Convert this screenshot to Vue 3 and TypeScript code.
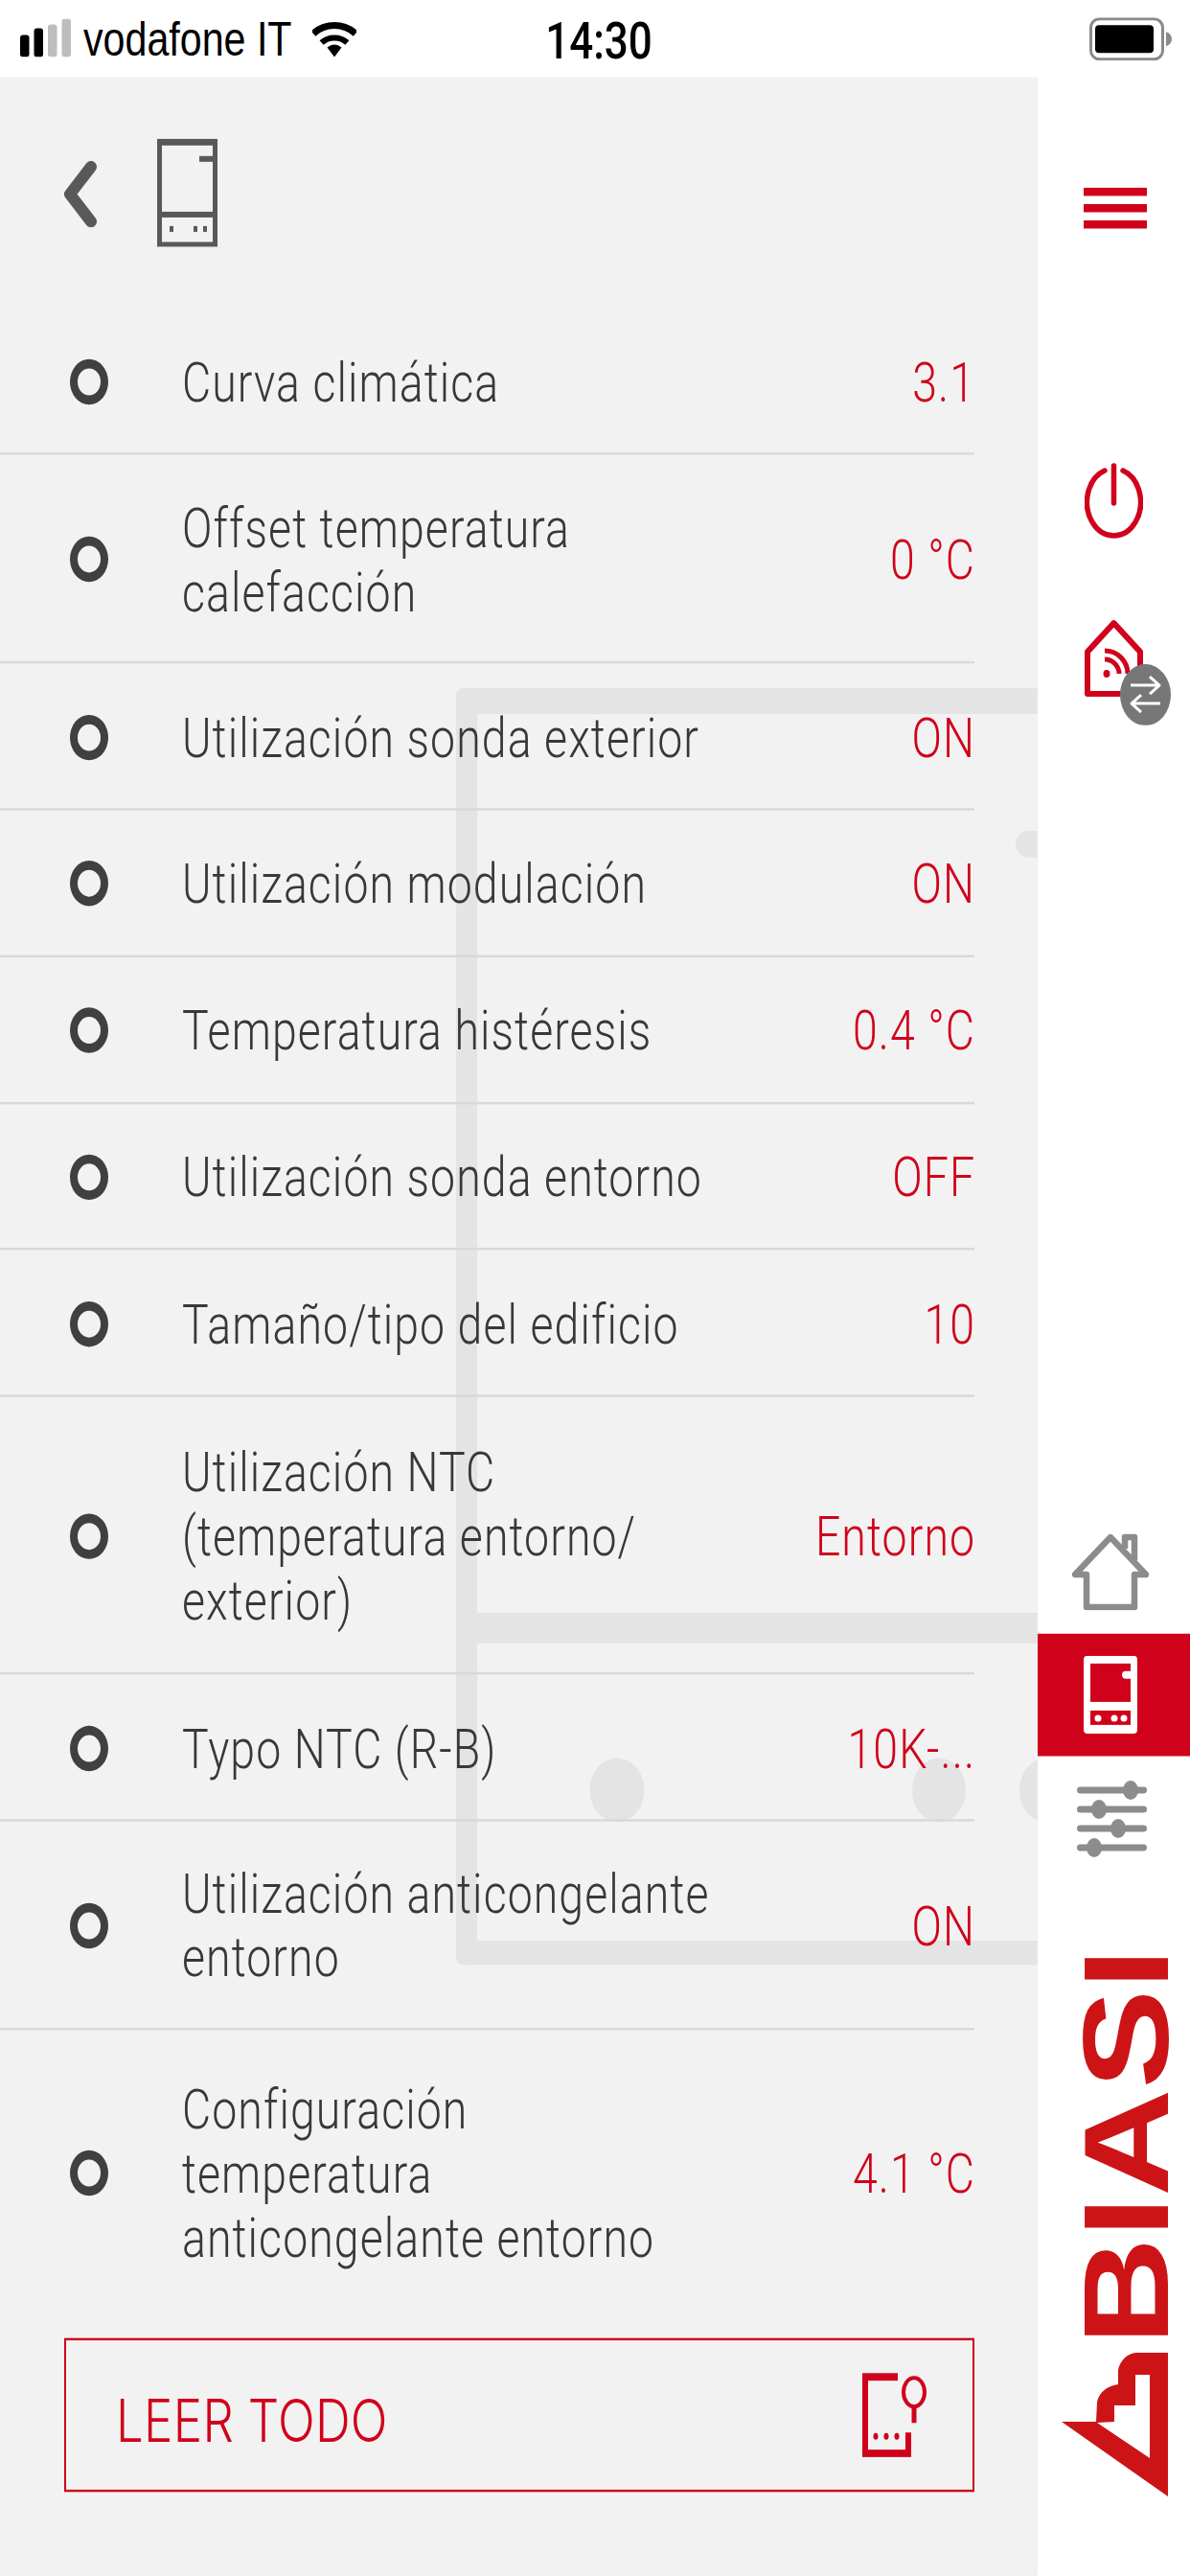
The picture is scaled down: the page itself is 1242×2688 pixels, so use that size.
<script setup lang="ts">
interface Row {
  lines: string[];
  value: string;
}

const rows: Row[] = [
  { lines: ['Curva climática'], value: '3.1' },
  { lines: ['Offset temperatura', 'calefacción'], value: '0 °C' },
  { lines: ['Utilización sonda exterior'], value: 'ON' },
  { lines: ['Utilización modulación'], value: 'ON' },
  { lines: ['Temperatura histéresis'], value: '0.4 °C' },
  { lines: ['Utilización sonda entorno'], value: 'OFF' },
  { lines: ['Tamaño/tipo del edificio'], value: '10' },
  { lines: ['Utilización NTC', '(temperatura entorno/', 'exterior)'], value: 'Entorno' },
  { lines: ['Typo NTC (R-B)'], value: '10K-...' },
  { lines: ['Utilización anticongelante', 'entorno'], value: 'ON' },
  { lines: ['Configuración', 'temperatura', 'anticongelante entorno'], value: '4.1 °C' },
];
</script>

<template>
  <div class="viewport">
    <div class="stage">
      <header class="status">
        <div class="status-left">
          <svg class="signal" viewBox="0 0 55 40" preserveAspectRatio="none">
            <rect x="1" y="17" width="9.500" height="23" rx="3" fill="#000" />
            <rect x="15.500" y="10" width="9.500" height="30" rx="3" fill="#000" />
            <rect x="30" y="6" width="9.500" height="34" rx="3" fill="#bdbdbd" />
            <rect x="44.500" y="0" width="9.500" height="40" rx="3" fill="#bdbdbd" />
          </svg>
          <span class="carrier">vodafone IT</span>
          <svg class="wifi" viewBox="0 0 46 40" preserveAspectRatio="none">
            <path d="M1 15.500A33 33 0 0 1 45 15.500" fill="none" stroke="#000" stroke-width="7" />
            <path d="M9.600 25A20 20 0 0 1 36.400 25" fill="none" stroke="#000" stroke-width="6" />
            <path d="M23 40L15.500 30Q23 24 30.500 30Z" fill="#000" />
          </svg>
        </div>
        <span class="clock">14:30</span>
        <div class="status-right">
          <svg class="battery" viewBox="0 0 86 45" preserveAspectRatio="none">
            <rect x="1.500" y="1.500" width="75" height="42" rx="9" fill="none" stroke="#8a8a8a" stroke-width="3" />
            <rect x="6" y="8" width="61" height="29" rx="4" fill="#000" />
            <path d="M80 15Q86 17 86 22.500Q86 28 80 30Z" fill="#8a8a8a" />
          </svg>
        </div>
      </header>

      <div class="body">
        <main class="panel">
          <svg class="watermark" viewBox="0 0 607 1333" preserveAspectRatio="none" aria-hidden="true">
            <rect x="0" y="0" width="640" height="27" rx="8" />
            <rect x="0" y="0" width="22" height="1333" rx="8" />
            <rect x="0" y="1307" width="640" height="26" rx="8" />
            <rect x="22" y="965" width="600" height="32" />
            <rect x="584" y="149" width="60" height="28" rx="14" />
            <ellipse cx="168" cy="1150" rx="28.500" ry="33.500" />
            <ellipse cx="504" cy="1150" rx="28" ry="33.500" />
            <ellipse cx="616" cy="1150" rx="28" ry="33.500" />
          </svg>

          <div class="head">
            <svg class="chevron" viewBox="0 0 34 69" preserveAspectRatio="none">
              <path d="M28 6L6 34.500L28 63" fill="none" stroke="#595959" stroke-width="12" stroke-linecap="round" stroke-linejoin="round" />
            </svg>
            <svg class="head-boiler" viewBox="0 0 63 113" preserveAspectRatio="none">
              <rect x="2.500" y="3" width="58" height="107" fill="none" stroke="#595959" stroke-width="5" />
              <rect x="0" y="0" width="63" height="7" fill="#595959" />
              <rect x="2" y="76" width="59" height="6" fill="#595959" />
              <rect x="44" y="18" width="17" height="6" fill="#595959" />
              <rect x="13" y="91" width="4" height="6" fill="#595959" />
              <rect x="38" y="91" width="4" height="6" fill="#595959" />
              <rect x="48" y="91" width="4" height="6" fill="#595959" />
            </svg>
          </div>

          <ul class="list">
            <li v-for="row in rows" :key="row.lines[0]" class="row" :class="'lines-' + row.lines.length">
              <span class="dot"></span>
              <span class="label">
                <span v-for="line in row.lines" :key="line" class="label-line">{{ line }}</span>
              </span>
              <span class="value">{{ row.value }}</span>
            </li>
          </ul>

          <button class="read-all" type="button">
            <span class="read-text">LEER TODO</span>
            <svg class="read-icon" viewBox="0 0 67 88" preserveAspectRatio="none">
              <path d="M37 3.500H3V84.500H48V62" fill="none" stroke="#d0021b" stroke-width="6" />
              <rect x="0" y="0" width="37" height="8" fill="#d0021b" />
              <rect x="0" y="80" width="51" height="8" fill="#d0021b" />
              <ellipse cx="14" cy="66" rx="2.500" ry="3.500" fill="#d0021b" />
              <ellipse cx="25" cy="66" rx="2.500" ry="3.500" fill="#d0021b" />
              <ellipse cx="36" cy="66" rx="2.500" ry="3.500" fill="#d0021b" />
              <ellipse cx="54" cy="20" rx="11" ry="15" fill="none" stroke="#d0021b" stroke-width="4" />
              <path d="M54 35V52" stroke="#d0021b" stroke-width="5" />
            </svg>
          </button>
        </main>

        <aside class="side">
          <div class="burger"><i></i><i></i><i></i></div>

          <svg class="power" viewBox="0 0 61 79" preserveAspectRatio="none">
            <path d="M21 8A28 35 0 1 0 40 8" fill="none" stroke="#d0021b" stroke-width="5.500" stroke-linecap="round" />
            <path d="M30.500 3V42" stroke="#d0021b" stroke-width="5.500" stroke-linecap="round" />
          </svg>

          <svg class="remote" viewBox="0 0 90 111" preserveAspectRatio="none">
            <path d="M30.500 4L58 34V78H3V34Z" fill="none" stroke="#d0021b" stroke-width="6" stroke-linejoin="round" />
            <ellipse cx="23" cy="57" rx="3.500" ry="4" fill="#d0021b" />
            <path d="M21 42A15 15 0 0 1 36 57" fill="none" stroke="#d0021b" stroke-width="5" />
            <path d="M21 33A24 24 0 0 1 45 57" fill="none" stroke="#d0021b" stroke-width="5" />
            <ellipse cx="63.500" cy="79" rx="26.500" ry="32" fill="#777" />
            <path d="M48 69H77M68 60L78 69L68 78M79 88H50M59 79L49 88L59 97" fill="none" stroke="#fff" stroke-width="3" stroke-linejoin="round" />
          </svg>

          <svg class="house" viewBox="0 0 80 80" preserveAspectRatio="none">
            <path d="M3 43L40 4L77 43H65V77H15V43Z" fill="none" stroke="#8c8c8c" stroke-width="6.500" stroke-linejoin="round" />
            <path d="M55 16V4H65V28" fill="none" stroke="#8c8c8c" stroke-width="6.500" stroke-linejoin="round" />
          </svg>

          <div class="active-tab">
            <svg class="tab-boiler" viewBox="0 0 56 81" preserveAspectRatio="none">
              <rect x="0" y="0" width="56" height="81" rx="4" fill="#fff" />
              <rect x="7" y="8" width="42" height="40" fill="#d0021b" />
              <rect x="7" y="57" width="42" height="15" fill="#d0021b" />
              <rect x="40" y="16" width="12" height="8" rx="4" fill="#fff" />
              <circle cx="15" cy="65" r="3.500" fill="#fff" />
              <circle cx="32" cy="65" r="3.500" fill="#fff" />
              <circle cx="42" cy="65" r="3.500" fill="#fff" />
            </svg>
          </div>

          <svg class="sliders" viewBox="0 0 73 80" preserveAspectRatio="none">
            <path d="M3.500 10H69.500M3.500 30H69.500M3.500 50H69.500M3.500 70H69.500" stroke="#8c8c8c" stroke-width="7" stroke-linecap="round" />
            <ellipse cx="56" cy="10" rx="8" ry="10" fill="#8c8c8c" />
            <ellipse cx="23" cy="30" rx="8" ry="10" fill="#8c8c8c" />
            <ellipse cx="43" cy="50" rx="8" ry="10" fill="#8c8c8c" />
            <ellipse cx="18" cy="70" rx="8" ry="10" fill="#8c8c8c" />
          </svg>

          <svg class="logo" viewBox="0 0 113 562" preserveAspectRatio="none">
            <text class="logo-text" transform="translate(112 404.300) rotate(-90)" textLength="414.600" lengthAdjust="spacingAndGlyphs">BIASI</text>
            <path fill-rule="evenodd" fill="#cc1417" d="M1 484L37 484L38 464C40 453 48 447 60 445L60 430C62 420 70 412 80 412L112 412L112 562ZM38 485L56 484L56 467L78 467L78 435L93 435L93 522Z" />
          </svg>
        </aside>
      </div>
    </div>
  </div>
</template>

<style>
html,
body {
  margin: 0;
  background: #fff;
}
</style>

<style scoped>
.viewport {
  width: 1242px;
  height: 2688px;
  overflow: hidden;
  background: #fff;
}

/* The reference is vertically stretched: everything is laid out in a shorter space. */
.stage {
  width: 1242px;
  height: 2209px;
  display: flex;
  flex-direction: column;
  transform: scaleY(1.2168);
  transform-origin: top left;
}

svg {
  display: block;
  flex: none;
}

.status {
  height: 66px;
  flex: none;
  display: grid;
  grid-template-columns: 1fr auto 1fr;
  align-items: center;
  color: #000;
}

.status-left {
  display: flex;
  align-items: center;
  padding-left: 20px;
}

.signal {
  width: 55px;
  height: 33px;
}

.carrier {
  margin: 3px 0 0 12px;
  font: 400 41.200px/1 "Liberation Sans", sans-serif;
}

.wifi {
  width: 46px;
  height: 33px;
  margin-left: 21px;
}

.clock {
  font: 500 44px/1 Roboto, sans-serif;
  margin: 3px 0 0 8px;
}

.status-right {
  display: flex;
  justify-content: flex-end;
  padding-right: 19px;
}

.battery {
  width: 86px;
  height: 37px;
}

.body {
  flex: 1;
  display: flex;
  min-height: 0;
}

.panel {
  position: relative;
  width: 1083px;
  flex: none;
  background: #f2f2f2;
  overflow: hidden;
}

.watermark {
  position: absolute;
  left: 476px;
  top: 523.500px;
  width: 607px;
  height: 1095.500px;
  fill: #e4e4e4;
}

.head {
  position: relative;
  height: 198.500px;
  box-sizing: border-box;
  padding: 53px 0 0 67px;
  display: flex;
  align-items: flex-start;
  gap: 63px;
}

.chevron {
  width: 34px;
  height: 57px;
  margin-top: 19px;
}

.head-boiler {
  width: 63px;
  height: 93px;
}

.list {
  position: relative;
  list-style: none;
  margin: 0;
  padding: 0;
  width: 1017px;
}

.row {
  display: flex;
  align-items: center;
  box-sizing: border-box;
  padding-left: 73px;
  border-bottom: 2.400px solid #d9d9d9;
}

.lines-1 {
  height: 125.800px;
}

.lines-2 {
  height: 178.900px;
}

.lines-3 {
  height: 238px;
}

.row:last-child {
  height: 243px;
  border-bottom: 0;
}

.dot {
  flex: none;
  width: 40px;
  height: 39px;
  box-sizing: border-box;
  border: 8px solid #404040;
  border-radius: 50%;
  margin: 2px 77px 0 0;
}

.label {
  flex: 1;
  min-width: 0;
  padding-top: 4px;
  font: 300 46.400px/55px Roboto, sans-serif;
  letter-spacing: 1.100px;
  color: #383838;
}

.label-line {
  display: block;
  white-space: nowrap;
}

.value {
  flex: none;
  padding-top: 4px;
  margin-right: -1.100px;
  font: 300 46.400px/55px Roboto, sans-serif;
  letter-spacing: 1.100px;
  color: #d0021b;
  white-space: nowrap;
}

.read-all {
  position: relative;
  display: flex;
  align-items: center;
  justify-content: space-between;
  box-sizing: border-box;
  width: 950px;
  height: 132.400px;
  margin: 20.800px 0 0 67px;
  padding: 0 48px 0 52px;
  background: transparent;
  border: 2.400px solid #d0021b;
  border-radius: 0;
}

.read-text {
  font: 300 51px/1 Inter, sans-serif;
  letter-spacing: 0.300px;
  color: #d0021b;
  margin-top: 10px;
}

.read-icon {
  width: 67px;
  height: 72.300px;
}

.side {
  flex: 1;
  display: flex;
  flex-direction: column;
  align-items: flex-start;
  padding-top: 95px;
  min-width: 0;
}

.burger {
  margin-left: 48px;
  width: 66px;
  display: flex;
  flex-direction: column;
  gap: 7.500px;
}

.burger i {
  display: block;
  height: 6.700px;
  background: #d0021b;
}

.power {
  width: 61px;
  height: 65px;
  margin: 200.600px 0 0 49px;
}

.remote {
  width: 90px;
  height: 91.200px;
  margin: 69px 0 0 49px;
}

.house {
  width: 80px;
  height: 65.700px;
  margin: 693px 0 0 36px;
}

.active-tab {
  width: 100%;
  height: 105.400px;
  margin-top: 20.400px;
  background: #d0021b;
  display: flex;
  align-items: center;
  padding-left: 48px;
  box-sizing: border-box;
}

.tab-boiler {
  width: 56px;
  height: 66.600px;
}

.sliders {
  width: 73px;
  height: 65.700px;
  margin: 20.600px 0 0 41px;
}

.logo {
  width: 113px;
  height: 461.900px;
  margin: 86.300px 0 0 24px;
}

.logo-text {
  font: 700 127px "Liberation Sans", sans-serif;
  fill: #cc1417;
}
</style>
